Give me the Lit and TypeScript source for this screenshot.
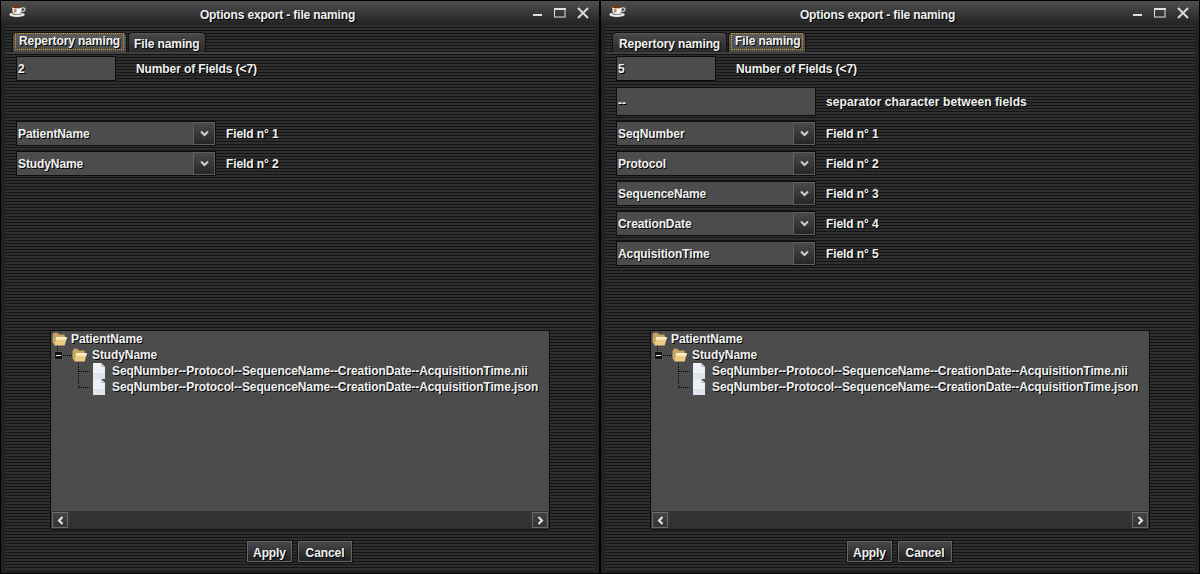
import { LitElement, html, css } from "lit";
import { customElement, property } from "lit/decorators.js";

const cup = html`<svg width="17" height="12" viewBox="0 0 17 12"><ellipse cx="8" cy="9.600" rx="7.800" ry="2.300" fill="#ececec"/><ellipse cx="8" cy="8.800" rx="4.800" ry="1.300" fill="#8c8c8c"/><path d="M3 1.500h10l-.7 5.200c-.4 1.800-2 2.300-4.300 2.300S4.100 8.500 3.700 6.700z" fill="#f4f4f4"/><ellipse cx="8" cy="1.700" rx="5" ry="1.600" fill="#6b3a1c"/><path d="M13 3h2c1.500 0 1.500 3-1.200 3.400h-1.300" fill="none" stroke="#ddd" stroke-width="1.200"/><path d="M5 4h2.500v3.500H5z" fill="#c9572a" opacity=".75"/></svg>`;

const folder = html`<svg width="15" height="14" viewBox="0 0 15 14"><path d="M.5 3 2 .8h3.500L7 2.500h5.500l.5 3-10 8-2.500-3z" fill="#c7a663"/><path d="M2.500 13.500 4.300 5H14.800L12.800 13.500z" fill="#eccb85"/><path d="M4.300 5H14.800l-.5 2.800H3.700z" fill="#fbeec6"/></svg>`;

const file = html`<svg width="12" height="16" viewBox="0 0 12 16"><path d="M0 0h8l4 4v12H0z" fill="#eef1f7"/><path d="M8 0v4h4z" fill="#c6cbd7"/><path d="M0 10h12v6H0z" fill="#e0e4ed"/></svg>`;

const chevronDown = html`<svg width="9" height="7" viewBox="0 0 9 7"><path d="M1 1.500 4.500 5 8 1.500" fill="none" stroke="#cfcfcf" stroke-width="2"/></svg>`;
const chevronLeft = html`<svg width="7" height="9" viewBox="0 0 7 9"><path d="M5.500 1 2 4.500 5.500 8" fill="none" stroke="#e6e6e6" stroke-width="2"/></svg>`;
const chevronRight = html`<svg width="7" height="9" viewBox="0 0 7 9"><path d="M1.500 1 5 4.500 1.500 8" fill="none" stroke="#e6e6e6" stroke-width="2"/></svg>`;

@customElement("export-window")
class ExportWindow extends LitElement {
  @property({ type: Number }) active = 0;
  @property() count = "";
  @property({ attribute: false }) fields: string[] = [];
  @property() separator = "";

  static styles = css`
    :host {
      display: flex;
      flex-direction: column;
      width: 600px;
      height: 574px;
      box-sizing: border-box;
      border: 1px solid #000;
      background: #222;
      font: bold 12px "Liberation Sans", Arial, sans-serif;
      letter-spacing: -0.1px;
      color: #f2f2f2;
      text-shadow: 1px 1px 0 #000;
    }
    .title {
      height: 24px;
      flex: none;
      display: flex;
      align-items: center;
      padding: 0 10px 0 8px;
      background: linear-gradient(#4e4e4e, #222);
    }
    .app-icon { width: 17px; height: 12px; flex: none; margin-top: -5px; display: flex; }
    .title-text { flex: 1; text-align: center; letter-spacing: -0.15px; padding-right: 4px; padding-top: 4px; }
    .win-buttons { display: flex; align-items: center; margin-top: -1px; }
    .win-buttons svg { display: block; }
    .win-buttons svg:nth-child(1) { margin-right: 12px; }
    .win-buttons svg:nth-child(2) { margin-right: 11px; }
    .body {
      flex: 1;
      display: flex;
      flex-direction: column;
      min-height: 0;
      margin: 0 4px 3px;
      background: repeating-linear-gradient(#2e2e2e 0 2px, #141414 2px 3px);
    }
    .tabs {
      height: 27px;
      flex: none;
      display: flex;
      align-items: flex-end;
      padding-left: 7px;
      gap: 1px;
      border-bottom: 2px solid #3f3f3f;
      box-sizing: content-box;
    }
    .tab {
      height: 20px;
      box-sizing: border-box;
      padding: 2px 0 0 6px;
      display: flex;
      align-items: center;
      white-space: nowrap;
      border: 1px solid #111;
      border-bottom: 0;
      border-radius: 5px 5px 0 0;
      background: linear-gradient(#4a4a4a, #2a2a2a);
      box-shadow: inset 0 1px 0 #555;
    }
    .t0 { width: 115px; }
    .t1 { width: 78px; padding-left: 5px; }
    .tab.on { background: linear-gradient(#5c5c5c, #4a4a4a); padding: 0 0 0 2px; align-items: flex-start; }
    .tab.on span {
      box-sizing: border-box;
      height: 17px;
      line-height: 16px;
      padding: 0 3px 0 4px;
      outline: 1px dotted #e0a020;
      outline-offset: -1px;
      display: block;
    }
    .t0.on span { width: 109px; }
    .t1.on span { width: 72px; }
    .form { padding: 2px 0 0 11px; display: flex; flex-direction: column; height: 254px; flex: none; box-sizing: border-box; }
    .row { display: flex; align-items: center; height: 25px; margin-bottom: 5px; flex: none; }
    .row.sep { height: 30px; padding-top: 1px; box-sizing: border-box; }
    .row.blank { visibility: hidden; }
    .sep .label { letter-spacing: 0.08px; }
    .field {
      box-sizing: border-box;
      height: 100%;
      display: flex;
      align-items: center;
      padding-left: 1px;
      background: #4c4c4c;
      border: 1px solid #0d0d0d;
    }
    .sep .field { padding-top: 2px; }
    .w100 { width: 100px; margin-right: 20px; }
    .w200 { width: 200px; margin-right: 10px; }
    .combo {
      box-sizing: border-box;
      width: 200px;
      height: 25px;
      margin-right: 10px;
      display: flex;
      background: #4c4c4c;
      border: 1px solid #0d0d0d;
    }
    .combo .val { flex: 1; display: flex; align-items: center; padding-left: 1px; }
    .combo .btn {
      width: 22px;
      flex: none;
      box-sizing: border-box;
      display: flex;
      align-items: center;
      justify-content: center;
      border: 1px solid #5f5f5f;
      background: linear-gradient(#4a4a4a, #262626);
    }
    .tree {
      flex: none;
      width: 500px;
      height: 200px;
      margin-left: 45px;
      margin-top: 22px;
      box-sizing: border-box;
      border: 1px solid #0d0d0d;
      background: #4c4c4c;
      display: flex;
      flex-direction: column;
    }
    .tree-body { flex: 1; position: relative; }
    .node { display: flex; align-items: center; height: 16px; white-space: nowrap; }
    .node svg { flex: none; display: block; }
    .n1 { padding-left: 1px; gap: 4px; }
    .n2 { padding-left: 3px; }
    .box {
      width: 9px; height: 9px; box-sizing: border-box; background: #111; border: 1px solid #555;
      display: flex; align-items: center; justify-content: center; flex: none;
    }
    .box i { display: block; width: 5px; height: 1px; background: #eee; }
    .dash { width: 9px; border-top: 1px dotted #000; flex: none; }
    .n2 svg { margin-right: 5px; }
    .n3 { padding-left: 27px; }
    .n3 .dash { width: 12px; margin-right: 3px; }
    .n3 svg { margin-right: 7px; }
    .vline { position: absolute; width: 0; border-left: 1px dotted #000; }
    .v1 { left: 6px; top: 15px; height: 5px; }
    .v2 { left: 27px; top: 32px; height: 25px; }
    .hbar {
      height: 18px;
      flex: none;
      display: flex;
      justify-content: space-between;
      background: #333;
    }
    .arrow {
      width: 16px;
      height: 16px;
      margin: 1px;
      box-sizing: border-box;
      display: flex;
      align-items: center;
      justify-content: center;
      border: 1px solid #6a6a6a;
      background: linear-gradient(#444, #333);
    }
    .actions {
      flex: 1;
      display: flex;
      justify-content: center;
      align-items: flex-start;
      gap: 6px;
      padding-top: 11px;
      padding-right: 1px;
    }
    button {
      all: unset;
      box-sizing: border-box;
      height: 21px;
      padding-top: 2px;
      display: flex;
      align-items: center;
      justify-content: center;
      border: 1px solid #666;
      background: linear-gradient(#484848, #222);
      outline: 1px solid #111;
      cursor: default;
    }
    .apply { width: 45px; }
    .cancel { width: 54px; }
  `;

  render() {
    const isFile = this.active === 1;
    const leafs = ["SeqNumber--Protocol--SequenceName--CreationDate--AcquisitionTime.nii", "SeqNumber--Protocol--SequenceName--CreationDate--AcquisitionTime.json"];
    return html`
      <div class="title">
        <span class="app-icon">${cup}</span>
        <span class="title-text">Options export - file naming</span>
        <span class="win-buttons">
          <svg width="9" height="13" viewBox="0 0 9 13"><rect x="0" y="8" width="9" height="2" fill="#e0e0e0"/></svg>
          <svg width="12" height="11" viewBox="0 0 12 11"><rect x=".5" y="1.500" width="10.500" height="8.500" fill="none" stroke="#e0e0e0" stroke-width="1"/><rect x="0" y="1" width="12" height="2" fill="#e0e0e0"/></svg>
          <svg width="12" height="12" viewBox="0 0 12 12"><path d="M1 1l10 10M11 1 1 11" stroke="#d8d8d8" stroke-width="2"/></svg>
        </span>
      </div>
      <div class="body">
        <div class="tabs">
          <div class="tab t0 ${isFile ? "" : "on"}"><span>Repertory naming</span></div>
          <div class="tab t1 ${isFile ? "on" : ""}"><span>File naming</span></div>
        </div>
        <div class="form">
          <div class="row">
            <div class="field w100">${this.count}</div>
            <span>Number of Fields (&lt;7)</span>
          </div>
          <div class="row sep ${isFile ? "" : "blank"}">
            <div class="field w200">${this.separator}</div>
            <span class="label">separator character between fields</span>
          </div>
          ${this.fields.map((f, i) => html`
            <div class="row">
              <div class="combo"><div class="val">${f}</div><div class="btn">${chevronDown}</div></div>
              <span>Field n° ${i + 1}</span>
            </div>`)}
        </div>
        <div class="tree">
          <div class="tree-body">
            <span class="vline v1"></span><span class="vline v2"></span>
            <div class="node n1">${folder}<span>PatientName</span></div>
            <div class="node n2"><span class="box"><i></i></span><span class="dash"></span>${folder}<span>StudyName</span></div>
            ${leafs.map((l) => html`<div class="node n3"><span class="dash"></span>${file}<span>${l}</span></div>`)}
          </div>
          <div class="hbar">
            <div class="arrow">${chevronLeft}</div>
            <div class="arrow">${chevronRight}</div>
          </div>
        </div>
        <div class="actions">
          <button class="apply">Apply</button>
          <button class="cancel">Cancel</button>
        </div>
      </div>
    `;
  }
}

@customElement("app-root")
class AppRoot extends LitElement {
  static styles = css`
    :host { display: flex; width: 1200px; height: 574px; background: #000; overflow: hidden; }
  `;
  render() {
    return html`
      <export-window .active=${0} count="2" .fields=${["PatientName", "StudyName"]}></export-window>
      <export-window .active=${1} count="5" separator="--" .fields=${["SeqNumber", "Protocol", "SequenceName", "CreationDate", "AcquisitionTime"]}></export-window>
    `;
  }
}
